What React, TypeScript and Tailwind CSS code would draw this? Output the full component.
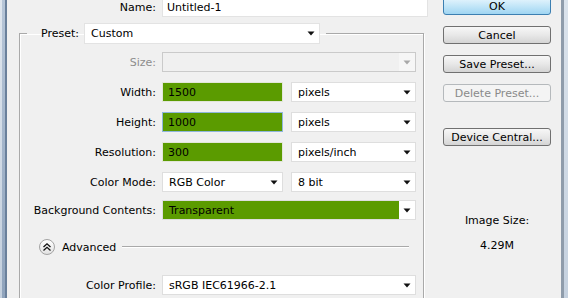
import type { ReactNode } from "react"

const Arrow = ({ disabled }: { disabled?: boolean }) => (
  <svg width="8" height="5" viewBox="0 0 8 5">
    <path d="M0.5 0.5h7L4 4.5z" fill={disabled ? "#a8a8a8" : "#111"} />
  </svg>
)

// combo box: value area + arrow part
function Select({
  value,
  width,
  green,
  disabled,
}: {
  value?: string
  width: string
  green?: boolean
  disabled?: boolean
}) {
  return (
    <div
      className={`flex h-[20px] shrink-0 border ${width} ${
        disabled ? "border-[#cacaca] bg-[#f0f0f0]" : "border-[#dedede] bg-white"
      }`}
    >
      <div className={`flex flex-1 items-center pl-[6px] ${green ? "bg-[#5b9b00]" : ""}`}>{value}</div>
      <div className={`flex w-[16px] items-center justify-center ${disabled ? "bg-[#f6f6f6]" : ""}`}>
        <Arrow disabled={disabled} />
      </div>
    </div>
  )
}

// plain text field, filled green in this dialog
function Field({ value, focused }: { value: string; focused?: boolean }) {
  return (
    <div
      className={`flex h-[20px] w-[121px] shrink-0 items-center border bg-[#5b9b00] pl-[5px] ${
        focused ? "border-[#8fb6dc]" : "border-[#e2e6d8]"
      }`}
    >
      {value}
    </div>
  )
}

function Row({ label, children, disabled, className = "" }: { label: string; children: ReactNode; disabled?: boolean; className?: string }) {
  return (
    <div className={`flex h-[20px] items-center ${className}`}>
      <div className={`w-[129px] shrink-0 text-right ${disabled ? "text-[#8d8d8d]" : ""}`}>{label}</div>
      <div className="ml-[6px] flex gap-[8px]">{children}</div>
    </div>
  )
}

function Button({ children, primary, disabled, className = "" }: { children: ReactNode; primary?: boolean; disabled?: boolean; className?: string }) {
  let look = "border-[#707070] bg-linear-to-b from-[#f7f7f7] via-[#e8e8e8] to-[#d4d4d4]"
  if (primary) look = "border-[#3c7fb1] bg-linear-to-b from-[#e6f5fd] via-[#c3e6f8] to-[#9fd5f2]"
  if (disabled) look = "border-[#b5b9bc] bg-[#f4f4f4] text-[#8a8a8a]"
  return (
    <div className={`flex h-[18px] w-[108px] items-center justify-center rounded-[3px] border ${look} ${className}`}>
      {children}
    </div>
  )
}

export default function App() {
  return (
    <div className="flex h-[298px] w-[568px] overflow-hidden bg-[#f0f0f0] font-['DejaVu_Sans',sans-serif] text-[11px] leading-[13px] text-black">
      {/* left window frame */}
      <div className="flex h-full shrink-0">
        <div className="w-[2px] bg-linear-to-b from-[#dfe6ee] to-[#c3cfdd]" />
        <div className="w-[3px] bg-linear-to-b from-[#b7c6d8] to-[#8fa3bc]" />
        <div className="w-[2px] bg-[#6a809b]" />
      </div>

      <div className="flex w-[554px] shrink-0">
        {/* left column */}
        <div className="mt-[-3px] w-[421px] shrink-0">
          <div className="flex h-[20px] items-center">
            <div className="w-[149px] text-right">Name:</div>
            <div className="ml-[6px] flex h-[20px] w-[266px] items-center border border-[#e3e3e3] bg-white pl-[4px]">
              Untitled-1
            </div>
          </div>

          <fieldset className="ml-[12px] mt-[6px] h-[320px] w-[405px] border border-[#a9a9a9] px-[7px] pt-[8px] shadow-[inset_1px_1px_0_#fff,1px_1px_0_#fff]">
            <legend className="flex items-center pr-[6px]">
              <div className="w-[52px] text-right">Preset:</div>
              <div className="ml-[5px] flex h-[21px] w-[236px] border border-[#e3e3e3] bg-white">
                <div className="flex flex-1 items-center pl-[6px]">Custom</div>
                <div className="flex w-[16px] items-center justify-center">
                  <Arrow />
                </div>
              </div>
            </legend>

            <Row label="Size:" disabled>
              <Select width="w-[254px]" disabled />
            </Row>
            <Row label="Width:" className="mt-[10px]">
              <Field value="1500" />
              <Select value="pixels" width="w-[125px]" />
            </Row>
            <Row label="Height:" className="mt-[10px]">
              <Field value="1000" focused />
              <Select value="pixels" width="w-[125px]" />
            </Row>
            <Row label="Resolution:" className="mt-[10px]">
              <Field value="300" />
              <Select value="pixels/inch" width="w-[125px]" />
            </Row>
            <Row label="Color Mode:" className="mt-[10px]">
              <Select value="RGB Color" width="w-[121px]" />
              <Select value="8 bit" width="w-[125px]" />
            </Row>
            <Row label="Background Contents:" className="mt-[8px]">
              <Select value="Transparent" width="w-[254px]" green />
            </Row>

            <div className="mt-[19px] flex h-[16px] items-center">
              <div className="ml-[12px] flex h-[16px] w-[16px] items-center justify-center rounded-full border border-[#a3a3a3] bg-linear-to-b from-white to-[#e2e2e2]">
                <svg width="10" height="10" viewBox="0 0 10 10" fill="none" stroke="#111" strokeWidth="1.3">
                  <path d="M1.5 5L5 1.8L8.5 5" />
                  <path d="M1.5 8.5L5 5.3L8.5 8.5" />
                </svg>
              </div>
              <div className="ml-[7px]">Advanced</div>
              <div className="ml-[6px] h-[2px] w-[287px] border-t border-b border-t-[#a9a9a9] border-b-white" />
            </div>

            <Row label="Color Profile:" className="mt-[20px]">
              <Select value="sRGB IEC61966-2.1" width="w-[254px]" />
            </Row>
          </fieldset>
        </div>

        {/* right column */}
        <div className="ml-[15px] mt-[-3px] flex w-[108px] shrink-0 flex-col">
          <Button primary>OK</Button>
          <Button className="mt-[11px]">Cancel</Button>
          <Button className="mt-[11px]">Save Preset...</Button>
          <Button className="mt-[11px]" disabled>
            Delete Preset...
          </Button>
          <Button className="mt-[26px]">Device Central...</Button>
          <div className="mt-[68px] text-center">Image Size:</div>
          <div className="mt-[12px] text-center">4.29M</div>
        </div>
      </div>

      {/* right window frame */}
      <div className="flex h-full shrink-0">
        <div className="w-[3px] bg-[#8f9cab]" />
        <div className="w-[4px] bg-linear-to-b from-[#dbe3ec] to-[#c5d1df]" />
      </div>
    </div>
  )
}
